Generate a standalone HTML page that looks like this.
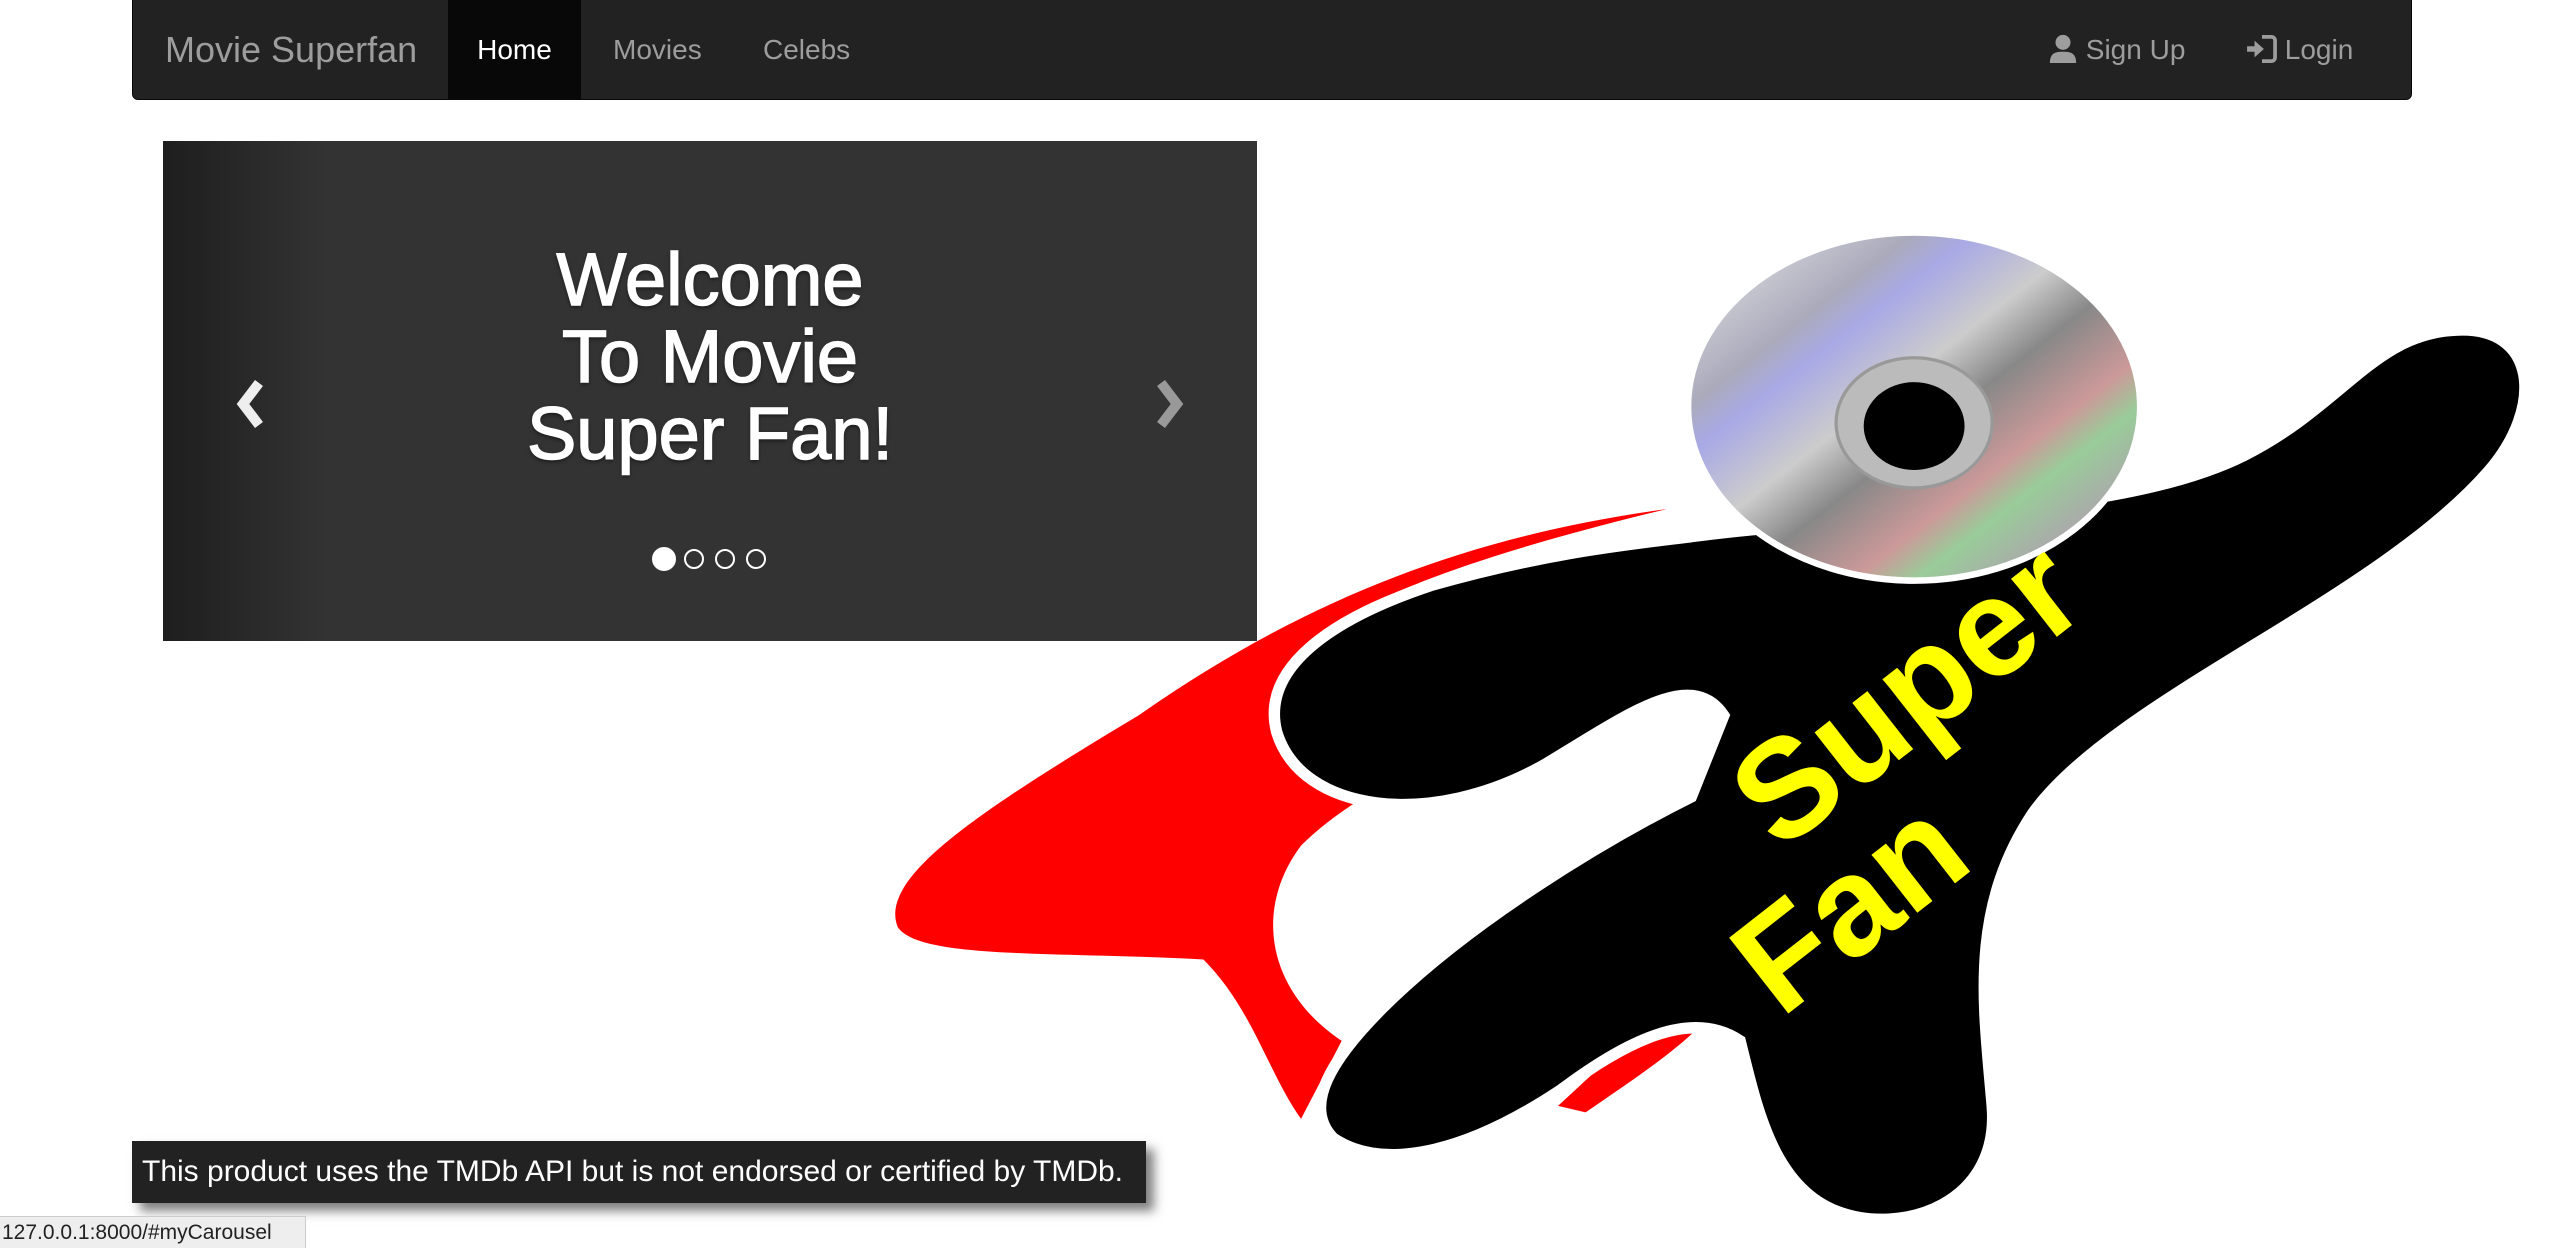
<!DOCTYPE html>
<html><head><meta charset="utf-8"><style>
html,body{margin:0;padding:0;width:2550px;height:1248px;overflow:hidden;background:#fff;font-family:"Liberation Sans",Arial,sans-serif;position:relative}
.nav{position:absolute;left:132px;top:0;width:2278px;height:99px;background:#222;border:1px solid #080808;border-top:none;border-radius:0 0 6px 6px}
.nav span{position:absolute;top:0;line-height:100px;color:#9d9d9d;font-size:28px}
.brand{font-size:36px!important;left:32px}
.home{left:315px;width:133px;background:#080808;color:#fff!important;text-align:center}
.ctl{position:absolute;left:163px;top:141px;width:1094px;height:500px;background:linear-gradient(90deg,#1e1e1e 0,#333 15%,#333 100%)}
.h{position:absolute;left:0;width:1094px;top:100px;text-align:center;color:#fff;font-size:74px;line-height:77px;text-shadow:0 2px 4px rgba(0,0,0,.6);-webkit-text-stroke:1.5px #fff}
.ind{position:absolute;top:408px;width:20px;height:20px;border:2px solid #fff;border-radius:50%;box-sizing:border-box}
.foot{position:absolute;left:132px;top:1141px;width:1014px;height:62px;background:#222;color:#fff;font-size:30px;line-height:62px;padding-left:10px;box-sizing:border-box;box-shadow:8px 8px 10px rgba(0,0,0,.5);white-space:nowrap}
.status{position:absolute;left:0;top:1216px;width:306px;height:32px;background:#eee;border:1px solid #ccc;border-left:none;border-bottom:none;font-size:21px;line-height:32px;color:#222;box-sizing:border-box;padding-left:2px}
</style></head><body>
<svg style="position:absolute;left:0;top:0" width="2550" height="1248" viewBox="0 0 1568 767.4">
<defs>
<linearGradient id="dg" x1="0" y1="0" x2="1" y2="1">
<stop offset="0" stop-color="#eee"/><stop offset=".25" stop-color="#aab"/><stop offset=".32" stop-color="#a9a9e6"/><stop offset=".45" stop-color="#ccc"/><stop offset=".55" stop-color="#888"/><stop offset=".68" stop-color="#c99"/><stop offset=".75" stop-color="#9c9"/><stop offset=".85" stop-color="#aaa"/><stop offset="1" stop-color="#666"/>
</linearGradient></defs>
<path d="M1025,313 C900,330 800,370 700,440 C600,500 540,540 552,570 C565,590 650,585 740,590 C770,620 780,660 800,688 L825,640 C780,610 770,560 800,520 C850,470 950,440 1000,430 L980,420 C880,460 800,480 785,440 C775,400 830,360 1025,313 Z" fill="#f00"/>
<path d="M1050,605 C1010,630 980,660 958,680 L975,684 C1010,660 1040,640 1055,620 Z" fill="#f00"/>
<path d="M1040,330 C1150,315 1300,320 1380,280 C1440,250 1460,205 1510,203 C1560,200 1565,250 1530,290 C1460,370 1300,430 1250,500 C1210,560 1220,620 1225,680 C1230,740 1170,760 1130,745 C1090,730 1080,680 1070,640 C1040,620 1000,640 960,670 C900,710 850,720 820,700 C800,680 820,650 850,620 C900,570 980,520 1040,490 L1060,440 C1040,410 1000,440 950,470 C880,510 800,500 785,450 C775,410 820,380 880,360 C950,340 1000,335 1040,330 Z" fill="#000" stroke="#fff" stroke-width="7"/>
<ellipse cx="1177" cy="250" rx="139" ry="107" fill="url(#dg)" stroke="#fff" stroke-width="4"/>
<ellipse cx="1177" cy="260" rx="48" ry="40" fill="#bbb" stroke="#999" stroke-width="2"/>
<ellipse cx="1177" cy="262" rx="31" ry="27" fill="#000"/>
<text x="1175" y="455" transform="rotate(-38 1175 430)" text-anchor="middle" font-family="Liberation Sans" font-weight="bold" font-size="86" fill="#ff0">Super</text>
<text x="1140" y="585" transform="rotate(-38 1140 560)" text-anchor="middle" font-family="Liberation Sans" font-weight="bold" font-size="86" fill="#ff0">Fan</text>
</svg>
<div class="nav">
<span class="brand">Movie Superfan</span>
<span class="home">Home</span>
<span style="left:480px">Movies</span>
<span style="left:630px">Celebs</span>
<span style="left:1915px"><svg width="30" height="30" viewBox="0 0 16 16" style="vertical-align:-4px"><circle cx="8" cy="5" r="4" fill="#9d9d9d"/><path d="M1 16 C1 10 5 10 8 10 C11 10 15 10 15 16Z" fill="#9d9d9d"/></svg> Sign Up</span>
<span style="left:2114px"><svg width="30" height="28" viewBox="0 0 16 15" style="vertical-align:-4px"><path d="M0 6h4V3l5 4.5-5 4.5V9H0z" fill="#9d9d9d"/><path d="M8 1h5a2 2 0 0 1 2 2v9a2 2 0 0 1-2 2H8" fill="none" stroke="#9d9d9d" stroke-width="2"/></svg> Login</span>
</div>
<div class="ctl">
<div class="h">Welcome<br>To Movie<br>Super Fan!</div>
<svg style="position:absolute;left:70px;top:238px" width="34" height="50" viewBox="0 0 34 50"><path d="M26 4 L10 25 L26 46" fill="none" stroke="#eee" stroke-width="10"/></svg>
<svg style="position:absolute;left:990px;top:238px" width="34" height="50" viewBox="0 0 34 50"><path d="M8 4 L24 25 L8 46" fill="none" stroke="#999" stroke-width="10"/></svg>
<div class="ind" style="left:489px;top:406px;width:24px;height:24px;background:#fff"></div>
<div class="ind" style="left:521px"></div>
<div class="ind" style="left:552px"></div>
<div class="ind" style="left:583px"></div>
</div>
<div class="foot">This product uses the TMDb API but is not endorsed or certified by TMDb.</div>
<div class="status">127.0.0.1:8000/#myCarousel</div>
</body></html>
